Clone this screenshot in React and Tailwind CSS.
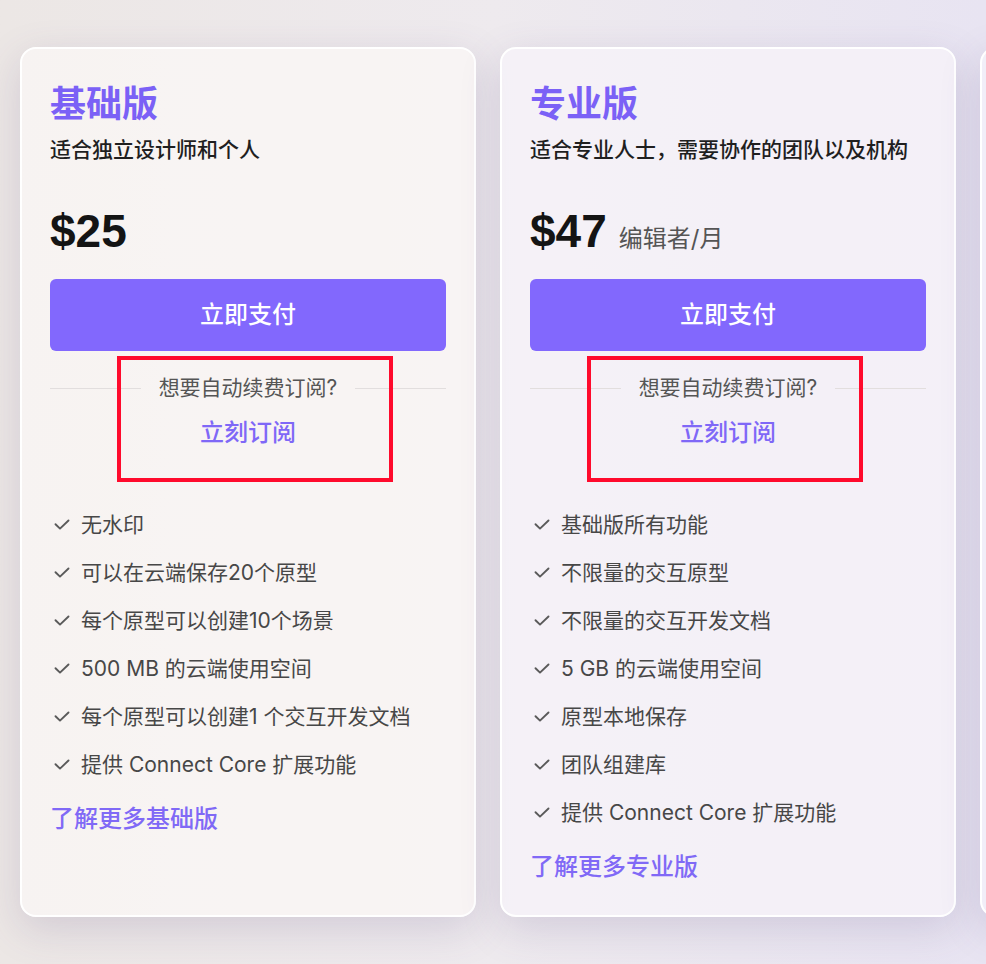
import { memo } from 'react';

const plans = [
  {
    id: 'basic',
    name: '基础版',
    desc: '适合独立设计师和个人',
    price: '$25',
    unit: null,
    features: [
      '无水印',
      '可以在云端保存20个原型',
      '每个原型可以创建10个场景',
      '500 MB 的云端使用空间',
      '每个原型可以创建1 个交互开发文档',
      '提供 Connect Core 扩展功能',
    ],
    more: '了解更多基础版',
    bg: 'bg-[#faf6f5]/80',
    markLeft: 'left-[67px]',
  },
  {
    id: 'pro',
    name: '专业版',
    desc: '适合专业人士，需要协作的团队以及机构',
    price: '$47',
    unit: '编辑者/月',
    features: [
      '基础版所有功能',
      '不限量的交互原型',
      '不限量的交互开发文档',
      '5 GB 的云端使用空间',
      '原型本地保存',
      '团队组建库',
      '提供 Connect Core 扩展功能',
    ],
    more: '了解更多专业版',
    bg: 'bg-[#f6f3f9]/80',
    markLeft: 'left-[57px]',
  },
];

/**
 * Small check mark in front of each feature
 */
const Check = memo(() => (
  <svg width="16" height="12" viewBox="0 0 16 12" fill="none" className="ml-[4px] flex-shrink-0">
    <path d="M1.5 5.2L6 9.6L14.5 1.5" stroke="#5a5a5a" strokeWidth="1.9" strokeLinecap="round" strokeLinejoin="round" />
  </svg>
));

Check.displayName = 'Check';

/**
 * One pricing card
 */
const PlanCard = memo(({ plan }) => (
  <div
    className={`w-[456px] flex-shrink-0 rounded-[16px] border-2 border-white ${plan.bg} px-[28px] pt-[33px] pb-[32px] shadow-[0_12px_40px_rgba(90,70,130,0.18)]`}
  >
    <h2 className="text-[36px] leading-[44px] font-semibold text-[#7b61f6]">{plan.name}</h2>
    <p className="mt-[9px] text-[21px] leading-[30px] font-medium text-[#1f1f1f]">{plan.desc}</p>

    {/* Price */}
    <div className="mt-[38px] flex items-baseline">
      <span className="text-[46px] leading-[56px] font-bold text-[#141414] font-['Liberation_Sans',sans-serif]">
        {plan.price}
      </span>
      {plan.unit && <span className="ml-3 text-[24px] text-[#555]">{plan.unit}</span>}
    </div>

    <button className="mt-[20px] flex h-[72px] w-full items-center justify-center rounded-[6px] bg-[#8268fd] text-[24px] font-medium text-white">
      立即支付
    </button>

    {/* Auto renew */}
    <div className="relative pt-[23px]">
      <div className="flex items-center">
        <div className="h-px flex-1 bg-[#e2dede]" />
        <span className="px-[18px] text-[21px] leading-[28px] text-[#555]">想要自动续费订阅?</span>
        <div className="h-px flex-1 bg-[#e2dede]" />
      </div>
      <div className="mt-[15px] text-center text-[24px] leading-[32px] font-medium text-[#7f68f7]">立刻订阅</div>
      {/* annotation box */}
      <div className={`pointer-events-none absolute top-[5px] ${plan.markLeft} h-[126px] w-[276px] border-4 border-[#ff0a2c]`} />
    </div>

    {/* Features */}
    <ul className="mt-[61px] flex flex-col gap-[18px]">
      {plan.features.map((f) => (
        <li key={f} className="flex items-center gap-[11px] text-[21px] leading-[30px] text-[#474747]">
          <Check />
          <span>{f}</span>
        </li>
      ))}
    </ul>

    <a className="mt-[23px] block text-[24px] leading-[32px] font-medium text-[#8069f6]">{plan.more}</a>
  </div>
));

PlanCard.displayName = 'PlanCard';

export default function App() {
  return (
    <div className="h-[964px] w-full overflow-hidden bg-gradient-to-r from-[#ece7e5] via-[#eeeaee] to-[#e8e4f2] font-['Inter','Noto_Sans_CJK_SC',sans-serif]">
      <div className="flex gap-6 pl-[20px] pt-[47px]">
        {plans.map((plan) => (
          <PlanCard key={plan.id} plan={plan} />
        ))}
        {/* next card, only its edge shows */}
        <div className="w-[456px] flex-shrink-0 rounded-[16px] border-2 border-white bg-[#f4f1fa]/80 shadow-[0_12px_40px_rgba(90,70,130,0.18)]" />
      </div>
    </div>
  );
}
